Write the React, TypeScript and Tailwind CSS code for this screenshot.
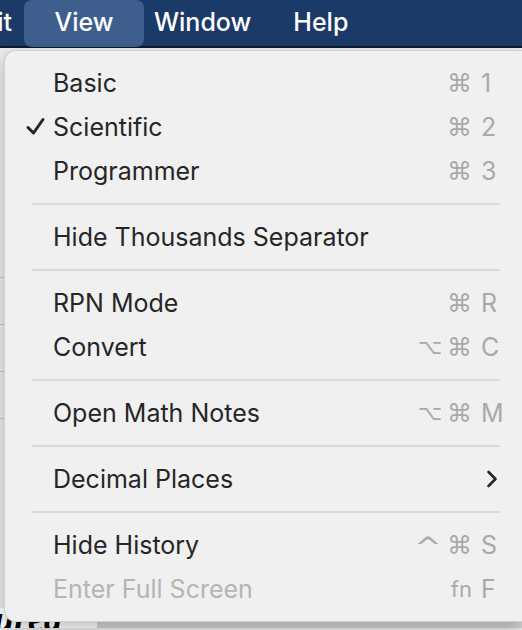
import React from "react"

type Item =
    | { kind: "sep" }
    | { kind: "item"; label: string; mods?: string[]; keyName?: string; checked?: boolean; disabled?: boolean; submenu?: boolean }

const items: Item[] = [
    { kind: "item", label: "Basic", mods: ["⌘"], keyName: "1" },
    { kind: "item", label: "Scientific", mods: ["⌘"], keyName: "2", checked: true },
    { kind: "item", label: "Programmer", mods: ["⌘"], keyName: "3" },
    { kind: "sep" },
    { kind: "item", label: "Hide Thousands Separator" },
    { kind: "sep" },
    { kind: "item", label: "RPN Mode", mods: ["⌘"], keyName: "R" },
    { kind: "item", label: "Convert", mods: ["⌥", "⌘"], keyName: "C" },
    { kind: "sep" },
    { kind: "item", label: "Open Math Notes", mods: ["⌥", "⌘"], keyName: "M" },
    { kind: "sep" },
    { kind: "item", label: "Decimal Places", submenu: true },
    { kind: "sep" },
    { kind: "item", label: "Hide History", mods: ["^", "⌘"], keyName: "S" },
    { kind: "item", label: "Enter Full Screen", mods: ["fn"], keyName: "F", disabled: true },
]

function CheckMark() {
    return (
        <svg width="22" height="20" viewBox="0 0 22 20" className="absolute left-[20px] top-[12px]">
            <path d="M3 10.5 L8.5 16 L18 2.5" fill="none" stroke="#262626" strokeWidth="3" strokeLinecap="round" strokeLinejoin="round" />
        </svg>
    )
}

function Chevron() {
    return (
        <svg width="12" height="18" viewBox="0 0 12 18" className="absolute right-[24px] top-[13px]">
            <path d="M2.5 2 L9.5 9 L2.5 16" fill="none" stroke="#262626" strokeWidth="2.6" strokeLinecap="round" strokeLinejoin="round" />
        </svg>
    )
}

function modClass(m: string) {
    if (m === "fn") return "text-[22px]"
    if (m === "^") return "text-[26px] font-['DejaVu_Sans',sans-serif] scale-x-125 translate-y-[2px]"
    if (m === "⌥") return "text-[21px] font-['DejaVu_Sans',sans-serif] -mr-[3px]"
    return "text-[25px] font-['DejaVu_Sans',sans-serif]"
}

function MenuRow({ item }: { item: Extract<Item, { kind: "item" }> }) {
    return (
        <div className="relative flex items-center h-[44px] pl-[48px]">
            {item.checked && <CheckMark />}
            <span className={item.disabled ? "text-[#b5b5b5]" : "text-[#262626]"}>{item.label}</span>
            {item.keyName && (
                <div className="ml-auto flex items-center text-[#a9a9a9]">
                    <div className="flex items-center gap-[8px] justify-end">
                        {item.mods?.map((m, i) => (
                            <span key={i} className={modClass(m)}>
                                {m}
                            </span>
                        ))}
                    </div>
                    <span className="w-[26px] ml-[9px]">{item.keyName}</span>
                    <span className="w-[15px]" />
                </div>
            )}
            {item.submenu && <Chevron />}
        </div>
    )
}

export default function App() {
    return (
        <div className="relative w-[522px] h-[630px] overflow-hidden bg-[#e9e9e9] font-['Inter',sans-serif]">
            {/* menu bar */}
            <div className="flex items-center h-[48px] bg-[#1c3a68] text-white text-[25px] font-medium border-b-2 border-[#0d1a2c]">
                <span className="w-[24px] -ml-[12px] text-right">it</span>
                <div className="ml-[12px] w-[120px] h-[47px] rounded-[8px] bg-[#3e5f8d] flex items-center justify-center">View</div>
                <span className="ml-[10px]">Window</span>
                <span className="ml-[42px]">Help</span>
            </div>

            {/* window behind the menu */}
            <div className="flex flex-col h-[580px]">
                <div className="flex-1 bg-[#ececec] flex flex-col">
                    <div className="h-[230px] border-b border-[#c8c8c8]" />
                    <div className="h-[47px] border-b border-[#c8c8c8]" />
                    <div className="h-[47px] border-b border-[#c8c8c8]" />
                    <div className="h-[47px] border-b border-[#c8c8c8]" />
                    <div className="flex-1" />
                </div>
                <div className="flex h-[20px]">
                    <div className="w-[97px] bg-white overflow-hidden relative">
                        <span className="absolute left-[-6px] top-[-16px] text-[36px] italic font-bold text-black font-['Liberation_Serif',serif]">urea</span>
                    </div>
                    <div className="flex-1 bg-gradient-to-b from-[#e2e2e2] to-[#d2d2d2] border-t border-[#bdbdbd]" />
                </div>
            </div>

            {/* dropdown menu */}
            <div className="absolute left-[4px] top-[50px] w-[518px] pt-[10px] pb-[10px] bg-[#f0f0f0] rounded-tl-[12px] rounded-bl-[12px] border border-r-0 border-[#d0d0d0] shadow-[0_6px_16px_rgba(0,0,0,0.25)] text-[25px] leading-none">
                {items.map((item, i) =>
                    item.kind === "sep" ? (
                        <div key={i} className="h-[22px] flex items-center pl-[27px]">
                            <div className="w-[468px] h-[2px] bg-[#dadada]" />
                        </div>
                    ) : (
                        <MenuRow key={i} item={item} />
                    )
                )}
            </div>
        </div>
    )
}
